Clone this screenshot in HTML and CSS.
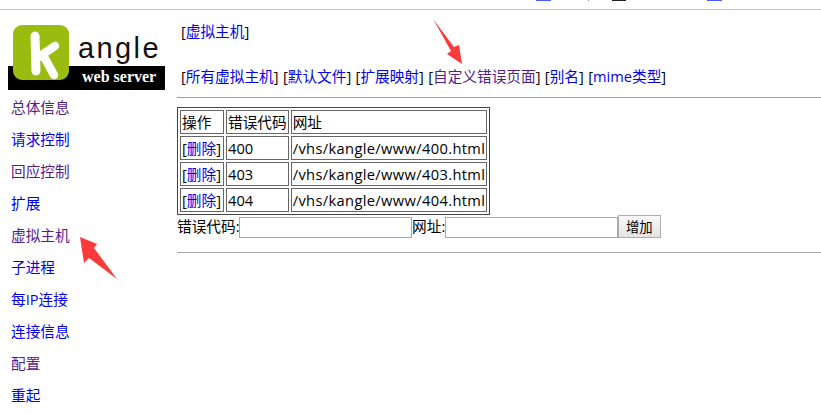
FILE: index.html
```html
<!DOCTYPE html>
<html lang="zh">
<head>
<meta charset="utf-8">
<title>kangle</title>
<link rel="stylesheet" href="styles.css">
</head>
<body>
<div class="topbar">
  <span class="frag frag-a"></span><span class="frag frag-b"></span><span class="frag frag-c"></span><span class="frag frag-d"></span>
</div>
<div class="page">
  <aside class="side">
    <div class="logo">
      <svg class="logo-svg" width="157" height="65" viewBox="0 0 157 65">
        <rect x="0" y="41" width="157" height="24" fill="#000"/>
        <rect x="5" y="0" width="56" height="55" rx="9" fill="#9abb10"/>
        <path d="M27 11L28 46" stroke="#fff" stroke-width="9" stroke-linecap="round"/>
        <path d="M29 33L47 21M35 30L46 50" stroke="#fff" stroke-width="8.5" stroke-linecap="round"/>
        <text x="70" y="33" class="logo-name">angle</text>
        <text x="74" y="57" class="logo-sub">web server</text>
      </svg>
    </div>
    <nav class="nav">
      <a class="visited" href="#">总体信息</a>
      <a href="#">请求控制</a>
      <a class="visited" href="#">回应控制</a>
      <a href="#">扩展</a>
      <a class="visited" href="#">虚拟主机</a>
      <a href="#">子进程</a>
      <a href="#">每IP连接</a>
      <a href="#">连接信息</a>
      <a class="visited" href="#">配置</a>
      <a href="#">重起</a>
    </nav>
  </aside>
  <main class="main">
    <div class="crumb">[<a href="#">虚拟主机</a>]</div>
    <div class="tabs">[<a href="#">所有虚拟主机</a>] [<a href="#">默认文件</a>] [<a href="#">扩展映射</a>] [<a class="visited" href="#">自定义错误页面</a>] [<a href="#">别名</a>] [<a href="#">mime类型</a>]</div>
    <hr class="rule rule-top">
    <table class="grid">
      <tr><td class="col-op">操作</td><td>错误代码</td><td>网址</td></tr>
      <tr><td class="col-op">[<a href="#">删除</a>]</td><td>400</td><td class="path">/vhs/kangle/www/400.html</td></tr>
      <tr><td class="col-op">[<a href="#">删除</a>]</td><td>403</td><td class="path">/vhs/kangle/www/403.html</td></tr>
      <tr><td class="col-op">[<a href="#">删除</a>]</td><td>404</td><td class="path">/vhs/kangle/www/404.html</td></tr>
    </table>
    <form class="add"><span class="label">错误代码:</span><input class="field" type="text"><span class="label">网址:</span><input class="field" type="text"><button class="btn" type="button">增加</button></form>
    <hr class="rule rule-bottom">
  </main>
</div>
<svg class="arrow arrow-top" width="45" height="58" viewBox="0 0 45 58"><polygon points="8,7 29,35 34,33 37,52 22,42 26,39" fill="#fb3b3b"/></svg>
<svg class="arrow arrow-side" width="52" height="55" viewBox="0 0 52 55"><polygon points="45,49 22,18 25,14 8,7 12,33 17,28" fill="#fb3b3b"/></svg>
</body>
</html>
```
FILE: styles.css
```css
html, body { margin: 0; padding: 0; background: #fff; }
body {
  font-family: "Open Sans", "Noto Sans CJK SC", sans-serif;
  font-size: 14.67px;
  line-height: 20px;
  color: #000;
  position: relative;
  width: 821px;
  height: 414px;
  overflow: hidden;
}
a { color: #0000ee; text-decoration: none; }
a.visited { color: #551a8b; }

.topbar { height: 9px; border-bottom: 1px solid #ccc; display: flex; align-items: flex-start; }
.frag { display: block; height: 1px; }
.frag-a { width: 15px; margin-left: 536px; background: #4a5cff; }
.frag-b { width: 1px; margin-left: 37px; background: #888; }
.frag-c { width: 14px; margin-left: 23px; background: #222; }
.frag-d { width: 15px; margin-left: 81px; background: #4a5cff; }

.page { display: flex; }
.side { width: 177px; flex: none; }
.logo { height: 80px; padding: 15px 0 0 8px; box-sizing: border-box; }
.logo-svg { display: block; }
.logo-name { font-family: "Liberation Sans", sans-serif; font-size: 29px; letter-spacing: 2.4px; fill: #111; }
.logo-sub { font-family: "Liberation Serif", serif; font-size: 16px; font-weight: bold; fill: #fff; }
.nav { display: flex; flex-direction: column; padding: 7px 0 0 11px; }
.nav a { height: 32px; line-height: 20px; }

.main { flex: 1; min-width: 0; }
.crumb { padding: 11px 0 0 4px; }
.tabs { padding: 25px 0 0 4px; word-spacing: 0.6px; }
.rule { border: 0; height: 1px; background: #a0a0a0; margin: 0; }
.rule-top { margin-top: 11px; }
.rule-bottom { margin-top: 14px; background: #a9a9a9; }

.grid { border: 1px solid #444; border-spacing: 2px; margin-top: 9px; }
.grid td { border: 1px solid #666; padding: 1px; height: 20px; white-space: nowrap; }
.grid .col-op { min-width: 40px; box-sizing: content-box; }
.grid .path { letter-spacing: 0.36px; }

.add { display: flex; align-items: flex-start; height: 23px; }
.label { margin-top: 1px; }
.field { width: 172.6px; height: 21px; box-sizing: border-box; border: 1px solid #a9a9a9; padding: 0; margin: 2px 0 0 0; background: #fff; }
.btn { width: 43px; height: 23px; box-sizing: border-box; border: 1px solid #adadad; background: linear-gradient(#f8f8f8, #e4e4e4); font: inherit; font-size: 13.33px; padding: 0; margin: 0; color: #000; }

.arrow { position: absolute; }
.arrow-top { left: 425px; top: 12px; }
.arrow-side { left: 72px; top: 230px; }
```
